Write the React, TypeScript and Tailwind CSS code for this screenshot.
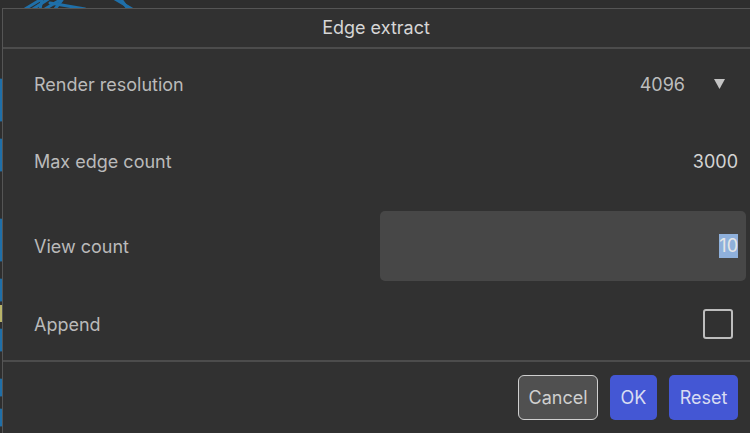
import React from "react";

export default function App() {
  return (
    <div
      className="relative w-[750px] h-[433px] overflow-hidden bg-[#2e2e2e]"
      style={{ fontFamily: "Inter, 'Noto Sans', sans-serif" }}
    >
      {/* background render lines */}
      <svg className="absolute left-0 top-0" width="750" height="433" viewBox="0 0 750 433">
        <g stroke="#1f6fa8" strokeWidth="3" fill="none" strokeLinecap="round">
          <path d="M25 9 L40 0" />
          <path d="M33 9 L50 -2" />
          <path d="M40 9 L42 0" />
          <path d="M45 9 L60 0" />
          <path d="M50 3 L85 9" />
          <path d="M55 9 L62 0" />
          <path d="M115 -1 L132 9" />
          <path d="M120 -2 L128 9" />
          <path d="M1 80 L1 120" />
          <path d="M1 140 L1 170" />
          <path d="M1 220 L1 260" />
          <path d="M1 280 L1 300" />
          <path d="M1 330 L1 350" />
          <path d="M1 380 L1 395" />
          <path d="M1 410 L1 425" />
        </g>
        <path d="M1 305 L1 322" stroke="#b9b46a" strokeWidth="3" />
      </svg>

      <div className="absolute left-[2px] top-[8px] w-[760px] h-[440px] border border-[#555555] bg-[#313131] flex flex-col">
        <div className="h-[40px] flex items-center justify-center text-[18px] text-[#d6d6d6] pr-[12px] pb-[2px] border-b-2 border-[#4c4c4c]">
          Edge extract
        </div>

        <div className="flex flex-col pl-[31px] pr-[15px] text-[18px] text-[#bababa]">
          <div className="h-[70px] flex items-center justify-between">
            <span>Render resolution</span>
            <div className="flex items-center mr-[21px]">
              <span className="text-[#bdbdbd]">4096</span>
              <svg className="ml-[29px]" width="11" height="11" viewBox="0 0 11 11">
                <path d="M0 0 L11 0 L5.5 10 Z" fill="#c4c4c4" />
              </svg>
            </div>
          </div>

          <div className="mt-[7px] h-[70px] flex items-center justify-between">
            <span>Max edge count</span>
            <span className="mr-[8px] text-[#d4d4d4]">3000</span>
          </div>

          <div className="mt-[15px] h-[70px] flex items-center justify-between">
            <span>View count</span>
            <div className="w-[366px] h-[70px] rounded-[5px] bg-[#474747] flex items-center justify-end pr-[8px]">
              <span className="bg-[#8fb0db] text-[#e6e6e6] leading-[24px]">10</span>
            </div>
          </div>

          <div className="mt-[8px] h-[70px] flex items-center justify-between">
            <span>Append</span>
            <div className="mr-[13px] w-[30px] h-[30px] rounded-[3px] border-2 border-[#bdbdbd]" />
          </div>
        </div>

        <div className="border-t-2 border-[#4c4c4c] mt-[1px]" />

        <div className="flex justify-end gap-[12px] pt-[13px] pr-[23px] text-[18px]">
          <button className="w-[80px] h-[45px] rounded-[6px] border border-[#cfcfcf] bg-[#505050] text-[#cfcfcf]">
            Cancel
          </button>
          <button className="w-[47px] h-[45px] rounded-[5px] bg-[#4457d4] text-[#d8dcf2]">
            OK
          </button>
          <button className="w-[69px] h-[45px] rounded-[5px] bg-[#4457d4] text-[#d8dcf2]">
            Reset
          </button>
        </div>
      </div>
    </div>
  );
}
